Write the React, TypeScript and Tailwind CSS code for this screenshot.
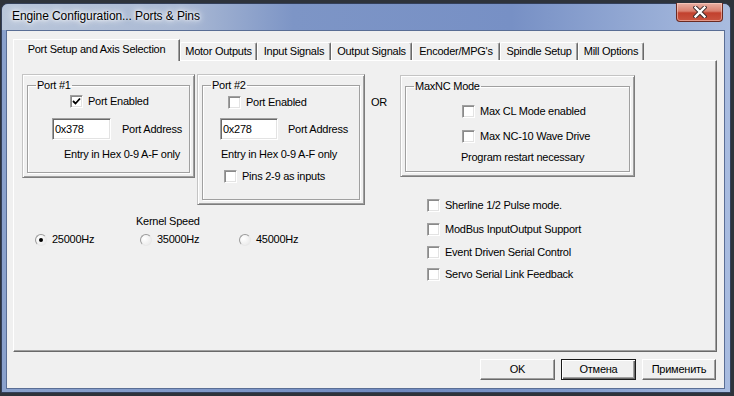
import React from "react";

const tabs = [
  { label: "Motor Outputs", w: "w-[77px]" },
  { label: "Input Signals", w: "w-[74px]" },
  { label: "Output Signals", w: "w-[81px]" },
  { label: "Encoder/MPG's", w: "w-[88px]" },
  { label: "Spindle Setup", w: "w-[78px]" },
  { label: "Mill Options", w: "w-[66px]" },
];

const extras = [
  { label: "Sherline 1/2 Pulse mode.", mt: "mt-[22px]" },
  { label: "ModBus InputOutput Support", mt: "mt-[11px]" },
  { label: "Event Driven Serial Control", mt: "mt-[10px]" },
  { label: "Servo Serial Link Feedback", mt: "mt-[9px]" },
];

function CheckBox({ checked = false }: { checked?: boolean }) {
  return (
    <span className="flex h-[13px] w-[13px] shrink-0 items-center justify-center border border-t-[#a0a0a0] border-l-[#a0a0a0] border-b-white border-r-white bg-white shadow-[inset_1px_1px_0_#8a8a8a,inset_-1px_-1px_0_#e3e3e3]">
      {checked && (
        <svg width="9" height="9" viewBox="0 0 9 9">
          <path d="M1 4 L3.5 6.5 L8 1.5" fill="none" stroke="#000" strokeWidth="1.8" />
        </svg>
      )}
    </span>
  );
}

function Radio({ checked = false }: { checked?: boolean }) {
  return (
    <span className="flex h-[12px] w-[12px] shrink-0 items-center justify-center rounded-full border border-[#9a9a9a] border-b-[#e8e8e8] border-r-[#e8e8e8] bg-[radial-gradient(circle_at_35%_35%,#ffffff,#e6e6e6)]">
      {checked && <span className="h-[4px] w-[4px] rounded-full bg-black" />}
    </span>
  );
}

function Group({ title, className, children }: { title: string; className: string; children?: React.ReactNode }) {
  return (
    <div className={`shrink-0 border border-t-[#c4c4c4] border-l-[#c4c4c4] border-b-[#7d7d7d] border-r-[#7d7d7d] p-[4px] shadow-[inset_1px_1px_0_#fff,inset_-1px_-1px_0_#a0a0a0] ${className}`}>
      <fieldset className="h-full border border-[#a0a0a0] pl-[8px] shadow-[inset_1px_1px_0_#fff,1px_1px_0_#fff]">
        <legend className="px-[1px] leading-[13px]">{title}</legend>
        {children}
      </fieldset>
    </div>
  );
}

function TextBox({ value, w }: { value: string; w: string }) {
  return (
    <div className={`flex h-[22px] ${w} items-center border border-t-[#a0a0a0] border-l-[#a0a0a0] border-b-white border-r-white bg-white pl-[2px] shadow-[inset_1px_1px_0_#696969,inset_-1px_-1px_0_#e3e3e3]`}>
      {value}
    </div>
  );
}

function Button({ label, isDefault = false }: { label: string; isDefault?: boolean }) {
  return (
    <div
      className={`flex h-[21px] items-center justify-center ${label === "Применить" ? "w-[74px]" : "w-[75px]"} ${
        isDefault
          ? "border border-[#1a1a1a] shadow-[inset_1px_1px_0_#fff,inset_-1px_-1px_0_#696969,inset_-2px_-2px_0_#a0a0a0]"
          : "border border-t-white border-l-white border-b-[#696969] border-r-[#696969] shadow-[inset_-1px_-1px_0_#a0a0a0]"
      } bg-[#f0f0f0]`}
    >
      {label}
    </div>
  );
}

export default function App() {
  return (
    <div className="h-[396px] w-[734px] overflow-hidden bg-[#2e333b] pb-[3px] pl-[1px] pr-[3px] pt-[3px] font-['Liberation_Sans',Arial,sans-serif] text-[11px] leading-[13px] tracking-[-0.25px] text-black">
      <div className="flex h-[390px] w-[730px] flex-col rounded-t-[7px] border border-[#34405a] bg-[linear-gradient(90deg,#8aa1cc_0%,#7f98c9_30%,#6f89bf_55%,#7f99cb_78%,#a8bce0_100%)]">
        {/* title bar */}
        <div className="flex h-[26px] items-start rounded-t-[6px] bg-[linear-gradient(90deg,#b9c6da_0%,#aab9d4_25%,#7d95c6_40%,#7790c5_70%,#a9bcdf_100%)]">
          <div className="mt-[6px] pl-[10px] text-[12px] tracking-[-0.1px] text-black [text-shadow:0_0_6px_#fff,0_0_3px_#fff,0_0_10px_#fff]">
            Engine Configuration... Ports &amp; Pins
          </div>
          <div className="ml-auto mr-[7px] flex h-[19px] w-[47px] -mt-px items-center justify-center rounded-b-[4px] border border-t-0 border-[#6a2a22] bg-[linear-gradient(180deg,#e9b0a4_0%,#d9806f_45%,#c2412e_55%,#c95440_100%)] shadow-[inset_0_0_0_1px_rgba(255,220,210,0.5)]">
            <svg width="14" height="12" viewBox="0 0 14 12">
              <path d="M2.5 1.5 L11.5 10.5 M11.5 1.5 L2.5 10.5" stroke="#3a2a2a" strokeWidth="4.2" strokeLinecap="square" />
              <path d="M2.5 1.5 L11.5 10.5 M11.5 1.5 L2.5 10.5" stroke="#fff" strokeWidth="2.4" strokeLinecap="square" />
            </svg>
          </div>
        </div>

        {/* client area */}
        <div className="ml-[4px] mr-[5px] flex h-[359px] flex-col border border-[#5a6e95] bg-[#f0f0f0]">
          {/* tabs */}
          <div className="relative z-10 ml-[6px] mt-[8px] flex h-[21px] items-end">
            <div className="-mb-px flex h-[22px] w-[167px] items-center justify-center border-l border-r border-t border-l-white border-t-white border-r-[#696969] bg-[#f0f0f0] pb-[2px] shadow-[inset_-1px_0_0_#a0a0a0]">
              Port Setup and Axis Selection
            </div>
            {tabs.map((t) => (
              <div
                key={t.label}
                className={`flex h-[18px] ${t.w} items-center justify-center rounded-t-[2px] border-l border-r border-t border-l-white border-t-white border-r-[#696969] bg-[#f0f0f0] shadow-[inset_-1px_0_0_#a0a0a0]`}
              >
                {t.label}
              </div>
            ))}
          </div>

          {/* tab panel */}
          <div className="ml-[6px] mr-[7px] h-[292px] border border-b-[#696969] border-l-white border-r-[#696969] border-t-white shadow-[inset_-1px_-1px_0_#a0a0a0]">
            <div className="flex pl-[8px] pt-[13px]">
              {/* left column */}
              <div className="flex flex-col">
                <div className="flex items-start gap-[2px]">
                  <Group title="Port #1" className="h-[104px] w-[173px]">
                    <div className="ml-[34px] mt-[3px] flex items-center gap-[5px]">
                      <CheckBox checked />
                      <span>Port Enabled</span>
                    </div>
                    <div className="ml-[16px] mt-[10px] flex items-center gap-[11px]">
                      <TextBox value="0x378" w="w-[59px]" />
                      <span>Port Address</span>
                    </div>
                    <div className="ml-[28px] mt-[8px]">Entry in Hex 0-9 A-F only</div>
                  </Group>
                  <Group title="Port #2" className="h-[131px] w-[168px]">
                    <div className="ml-[17px] mt-[4px] flex items-center gap-[5px]">
                      <CheckBox />
                      <span>Port Enabled</span>
                    </div>
                    <div className="ml-[9px] mt-[9px] flex items-center gap-[10px]">
                      <TextBox value="0x278" w="w-[58px]" />
                      <span>Port Address</span>
                    </div>
                    <div className="ml-[10px] mt-[8px]">Entry in Hex 0-9 A-F only</div>
                    <div className="ml-[13px] mt-[9px] flex items-center gap-[5px]">
                      <CheckBox />
                      <span>Pins 2-9 as inputs</span>
                    </div>
                  </Group>
                </div>
                <div className="ml-[114px] mt-[10px]">Kernel Speed</div>
                <div className="ml-[13px] mt-[5px] flex items-center">
                  <div className="flex w-[105px] items-center gap-[5px]">
                    <Radio checked />
                    <span>25000Hz</span>
                  </div>
                  <div className="flex w-[99px] items-center gap-[5px]">
                    <Radio />
                    <span>35000Hz</span>
                  </div>
                  <div className="flex items-center gap-[5px]">
                    <Radio />
                    <span>45000Hz</span>
                  </div>
                </div>
              </div>

              {/* OR */}
              <div className="ml-[6px] mt-[22px] w-[29px]">OR</div>

              {/* right column */}
              <div className="flex flex-col">
                <Group title="MaxNC Mode" className="mt-[1px] h-[102px] w-[235px]">
                  <div className="ml-[48px] mt-[12px] flex items-center gap-[5px]">
                    <CheckBox />
                    <span>Max CL Mode enabled</span>
                  </div>
                  <div className="ml-[48px] mt-[12px] flex items-center gap-[5px]">
                    <CheckBox />
                    <span>Max NC-10 Wave Drive</span>
                  </div>
                  <div className="ml-[47px] mt-[8px]">Program restart necessary</div>
                </Group>
                {extras.map((e) => (
                  <div key={e.label} className={`ml-[27px] ${e.mt} flex items-center gap-[5px]`}>
                    <CheckBox />
                    <span>{e.label}</span>
                  </div>
                ))}
              </div>
            </div>
          </div>

          {/* buttons */}
          <div className="mr-[8px] mt-[7px] flex justify-end gap-[6px]">
            <Button label="OK" />
            <Button label="Отмена" isDefault />
            <Button label="Применить" />
          </div>
        </div>
      </div>
    </div>
  );
}
